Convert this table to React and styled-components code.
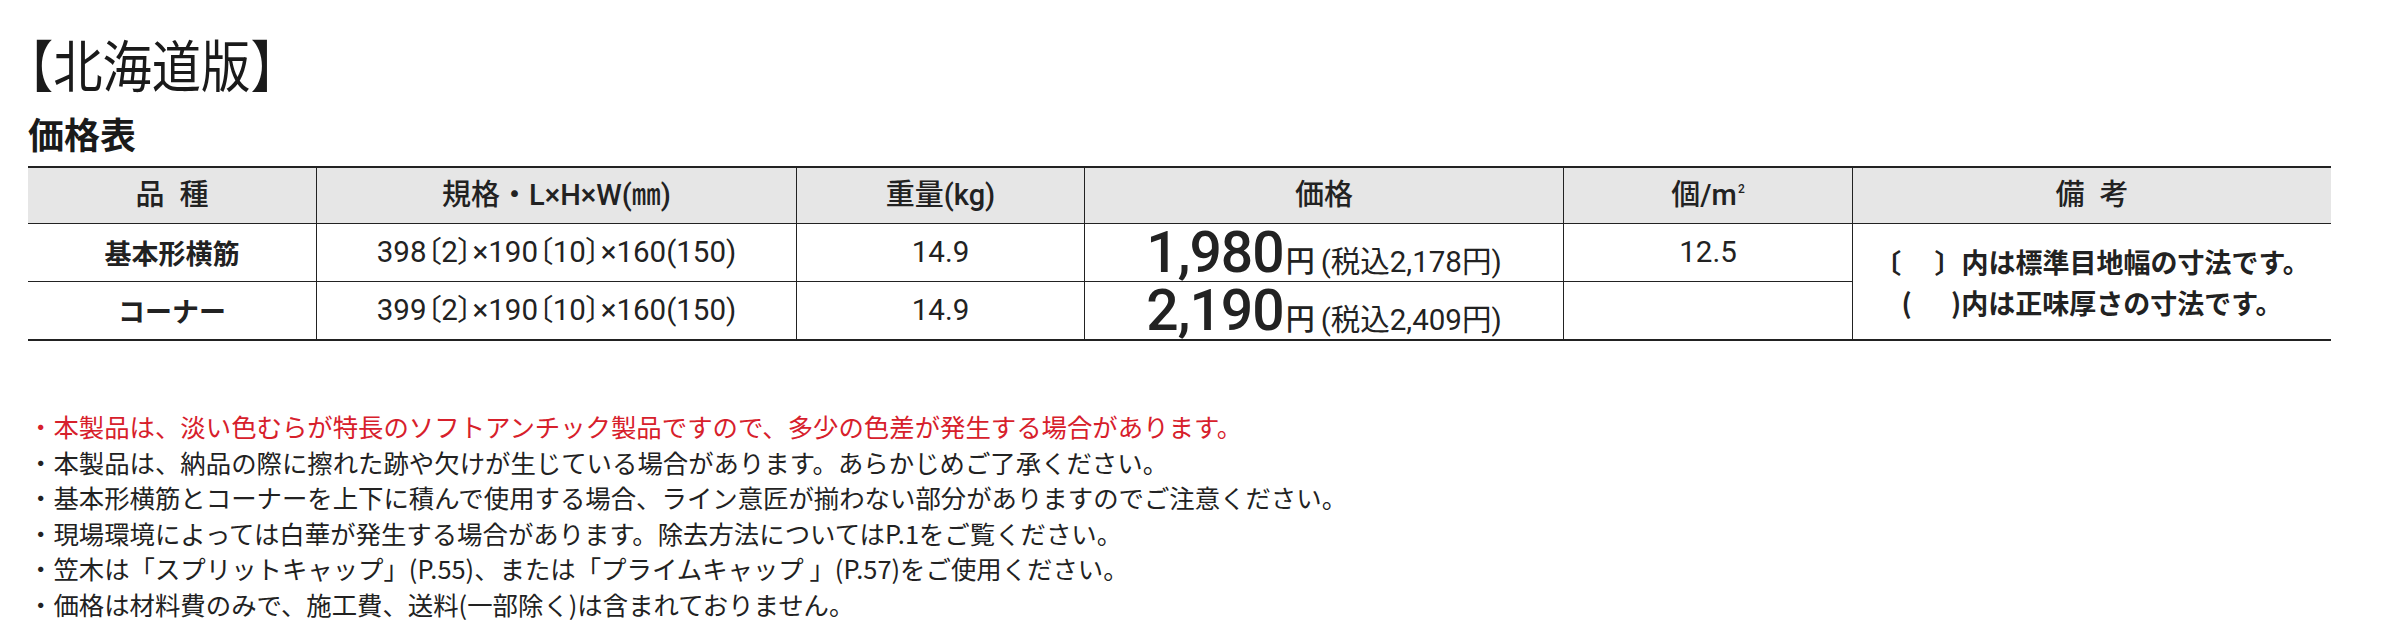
import React from 'react';
import styled, { createGlobalStyle } from 'styled-components';

const JP = `'Noto Sans CJK JP', 'Noto Sans', sans-serif`;
const NUM = `Roboto, 'Noto Sans CJK JP', sans-serif`;

const GlobalStyle = createGlobalStyle`
	html, body {
		margin: 0;
		padding: 0;
		background: #ffffff;
	}
	body {
		font-family: ${JP};
		color: #222222;
	}
`;

const rows = [
	{ name: '基本形横筋', size: '398〔2〕×190〔10〕×160(150)', weight: '14.9', price: '1,980', tax: '2,178', per: '12.5' },
	{ name: 'コーナー', size: '399〔2〕×190〔10〕×160(150)', weight: '14.9', price: '2,190', tax: '2,409', per: '' },
];

const notes = [
	{ text: '・本製品は、淡い色むらが特長のソフトアンチック製品ですので、多少の色差が発生する場合があります。', red: true },
	{ text: '・本製品は、納品の際に擦れた跡や欠けが生じている場合があります。あらかじめご了承ください。' },
	{ text: '・基本形横筋とコーナーを上下に積んで使用する場合、ライン意匠が揃わない部分がありますのでご注意ください。' },
	{ text: '・現場環境によっては白華が発生する場合があります。除去方法についてはP.1をご覧ください。' },
	{ text: '・笠木は「スプリットキャップ」(P.55)、または「プライムキャップ 」(P.57)をご使用ください。' },
	{ text: '・価格は材料費のみで、施工費、送料(一部除く)は含まれておりません。' },
];

const App = () => {
	return (
		<Page>
			<GlobalStyle />
			<Title>【北海道版】</Title>
			<SubTitle>価格表</SubTitle>
			<PriceGrid>
				<Cell $head>品&ensp;種</Cell>
				<Cell $head>規格・L×H×W(㎜)</Cell>
				<Cell $head>重量(kg)</Cell>
				<Cell $head>価格</Cell>
				<Cell $head>
					個/m<Sup>2</Sup>
				</Cell>
				<Cell $head $last>
					備&ensp;考
				</Cell>
				{rows.map((r, idx) => (
					<React.Fragment key={idx}>
						<Cell $bottom={idx === rows.length - 1}>
							<Name>{r.name}</Name>
						</Cell>
						<Cell $bottom={idx === rows.length - 1}>
							<Num $palt>{r.size}</Num>
						</Cell>
						<Cell $bottom={idx === rows.length - 1}>
							<Num>{r.weight}</Num>
						</Cell>
						<Cell $bottom={idx === rows.length - 1}>
							<Price>
								<Big>{r.price}</Big>
								<Yen>円</Yen>
								<Num>(税込{r.tax}円)</Num>
							</Price>
						</Cell>
						<Cell $bottom={idx === rows.length - 1}>
							<Num>{r.per}</Num>
						</Cell>
						{idx === 0 && (
							<Cell $last $bottom $span>
								<Remark>
									〔&nbsp;&#12288;〕内は標準目地幅の寸法です。
									<br />
									(&#12288;&nbsp;&nbsp;)内は正味厚さの寸法です。
								</Remark>
							</Cell>
						)}
					</React.Fragment>
				))}
			</PriceGrid>
			<Notes>
				{notes.map((n, idx) => (
					<Note key={idx} $red={n.red}>
						{n.text}
					</Note>
				))}
			</Notes>
		</Page>
	);
};

export default App;

const Page = styled.div`
	width: 2388px;
	height: 644px;
	box-sizing: border-box;
	padding: 29px 57px 0 28px;
	overflow: hidden;
`;
const Title = styled.h1`
	display: block;
	width: max-content;
	margin: 0 0 0 -24px;
	font-family: ${JP};
	font-size: 56px;
	font-weight: 400;
	line-height: 68px;
	color: #1a1a1a;
	transform: scaleX(0.88);
	transform-origin: left center;
`;
const SubTitle = styled.h2`
	margin: 14px 0 0;
	font-family: ${JP};
	font-size: 36px;
	font-weight: 700;
	line-height: 44px;
	color: #1a1a1a;
`;
const PriceGrid = styled.div`
	margin-top: 11px;
	display: grid;
	grid-template-columns: 289px 480px 288px 479px 289px 478px;
	grid-template-rows: 56px 58px 57px;
	border-top: 2px solid #222222;
	border-bottom: 2px solid #222222;
	font-family: ${NUM};
`;
const Cell = styled.div`
	box-sizing: border-box;
	display: flex;
	align-items: center;
	justify-content: center;
	grid-row: ${(p) => (p.$span ? 'span 2' : 'auto')};
	border-right: ${(p) => (p.$last ? 'none' : '1px solid #222222')};
	border-bottom: ${(p) => (p.$bottom ? 'none' : '1px solid #222222')};
	background: ${(p) => (p.$head ? '#e6e6e6' : 'transparent')};
	font-size: 29px;
	font-weight: 500;
	line-height: 1;
	white-space: nowrap;
`;
const Sup = styled.span`
	font-size: 12px;
	align-self: flex-start;
	margin-top: 15px;
	margin-left: 1px;
`;
const Name = styled.span`
	font-family: ${JP};
	font-size: 27px;
	font-weight: 700;
`;
const Num = styled.span`
	font-family: ${NUM};
	font-size: 29.5px;
	font-weight: 400;
	font-feature-settings: ${(p) => (p.$palt ? "'palt'" : 'normal')};
`;
const Price = styled.div`
	display: flex;
	align-items: baseline;
	line-height: 1;
`;
const Big = styled.span`
	font-family: ${NUM};
	font-size: 57px;
	font-weight: 500;
	letter-spacing: -1px;
`;
const Yen = styled.span`
	font-family: ${JP};
	font-size: 29px;
	font-weight: 500;
	margin: 0 6px 0 2px;
`;
const Remark = styled.div`
	font-family: ${JP};
	font-size: 27px;
	font-weight: 700;
	line-height: 41px;
	text-align: center;
`;
const Notes = styled.ul`
	list-style: none;
	margin: 68px 0 0;
	padding: 0;
	font-family: ${JP};
	font-size: 25.4px;
	line-height: 35.5px;
`;
const Note = styled.li`
	color: ${(p) => (p.$red ? '#d7202b' : '#222222')};
	white-space: nowrap;
`;
